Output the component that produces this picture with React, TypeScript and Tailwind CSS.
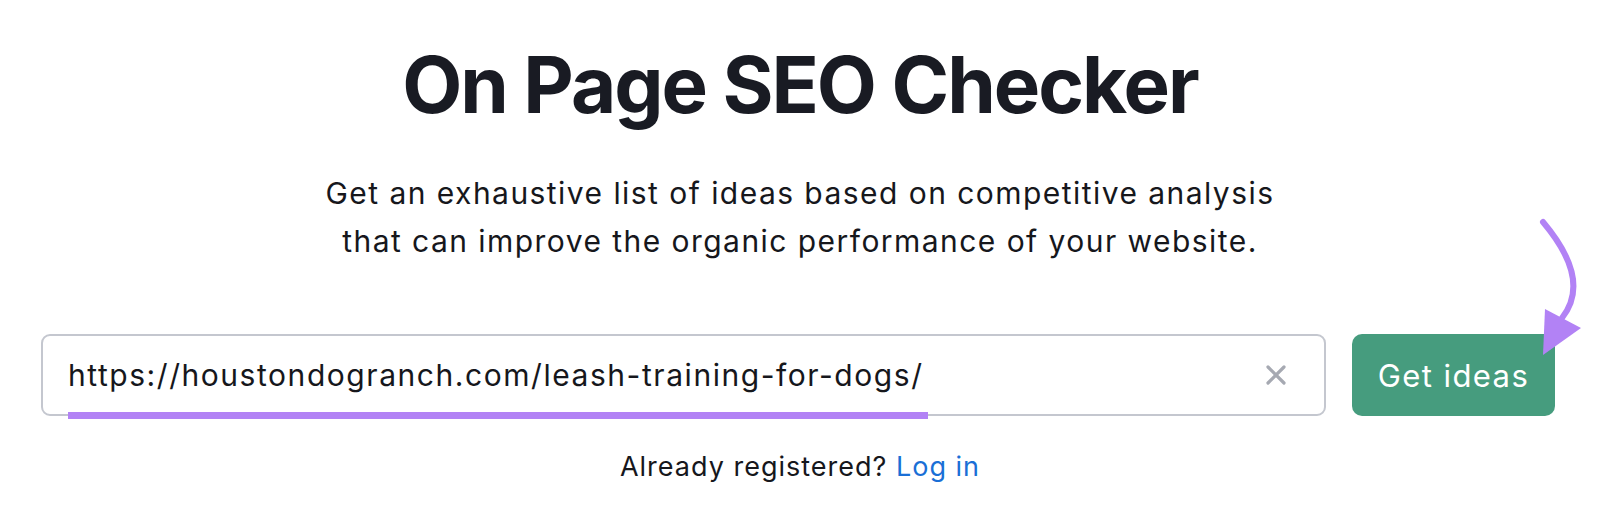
import React from "react";

function ClearIcon() {
  return (
    <svg width="20" height="20" viewBox="0 0 20 20" fill="none">
      <path d="M2 2L18 18M18 2L2 18" stroke="#a6a9b2" strokeWidth="3.2" strokeLinecap="round" />
    </svg>
  );
}

function PointerArrow() {
  return (
    <svg
      className="absolute left-[1520px] top-[210px]"
      width="80"
      height="160"
      viewBox="0 0 80 160"
      fill="none"
    >
      <path d="M23 12Q72 70 42 108" stroke="#b282f5" strokeWidth="6" strokeLinecap="round" />
      <path d="M25 99L61 118L23 145Z" fill="#b282f5" />
    </svg>
  );
}

export default function App() {
  return (
    <div
      className="relative h-[520px] w-[1600px] overflow-hidden bg-white"
      style={{ fontFamily: "Inter, 'Noto Sans', sans-serif" }}
    >
      <div className="flex flex-col items-center">
        <h1 className="mt-[46px] text-[78px] font-bold leading-none tracking-[-2px] text-[#191b23]">
          On Page SEO Checker
        </h1>

        <p className="mt-[45px] text-center text-[30px] leading-[48px] tracking-[1.45px] text-[#16171c]">
          Get an exhaustive list of ideas based on competitive analysis
          <br />
          that can improve the organic performance of your website.
        </p>

        {/* URL form */}
        <div className="mt-[69px] flex w-full items-center gap-[26px] pl-[41px]">
          <div className="relative flex h-[82px] w-[1285px] items-center rounded-[9px] border-2 border-[#c4c7cf] bg-white pl-[25px] pr-[38px]">
            <span className="text-[30px] leading-none tracking-[1.55px] text-[#16171c]">
              https://houstondogranch.com/leash-training-for-dogs/
            </span>
            <span className="ml-auto flex">
              <ClearIcon />
            </span>
            <span className="absolute bottom-[-5px] left-[25px] h-[7px] w-[860px] bg-[#b282f5]" />
          </div>
          <button className="h-[82px] w-[203px] rounded-[10px] bg-[#469c7e] text-[31px] leading-none tracking-[1.4px] text-white">
            Get ideas
          </button>
        </div>

        <p className="mt-[37px] text-[27px] leading-none tracking-[1px] text-[#16171c]">
          Already registered? <span className="text-[#1a6fd6]">Log in</span>
        </p>
      </div>

      <PointerArrow />
    </div>
  );
}
